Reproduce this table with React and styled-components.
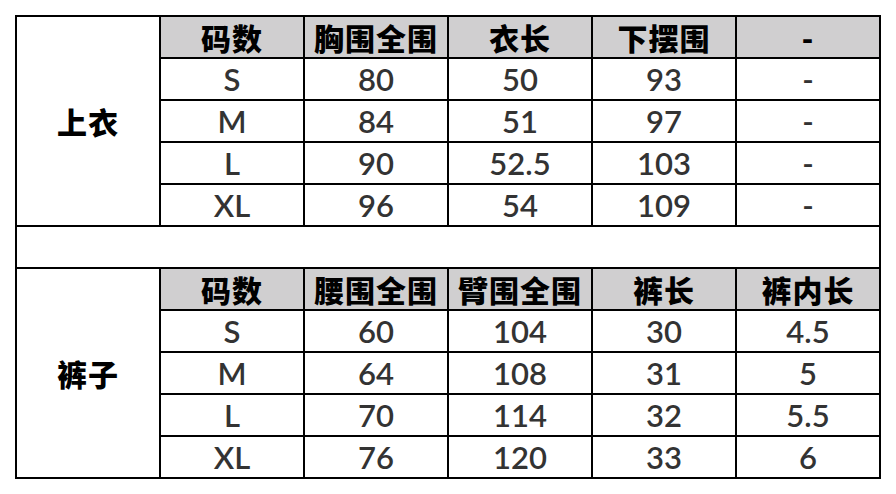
import React from "react";
import styled, { createGlobalStyle } from "styled-components";

const GlobalStyle = createGlobalStyle`
    body {
        margin: 0;
        background: #ffffff;
        font-family: Lato, "Noto Sans CJK SC", sans-serif;
    }
`;

const Page = styled.div`
    padding: 15px 0 0 15px;
`;

const SizeTable = styled.table`
    border-collapse: collapse;
    table-layout: fixed;
    width: 866px;
`;

const Col = styled.col`
    width: 144px;
`;

const Row = styled.tr`
    height: 42px;
`;

const Cell = styled.td`
    border: 2px solid #000;
    padding: 0;
    text-align: center;
    vertical-align: middle;
    line-height: 1;
    font-family: Lato, "Noto Sans CJK SC", sans-serif;
    font-size: 31px;
    font-weight: 600;
    color: #333;
`;

const HeadCell = styled(Cell)`
    background: #d0cfd0;
    color: #000;
    font-family: "Noto Sans CJK SC", sans-serif;
    font-size: 30px;
    font-weight: 900;
    letter-spacing: 1px;
`;

const GroupCell = styled(Cell)`
    color: #000;
    font-family: "Noto Sans CJK SC", sans-serif;
    font-size: 30px;
    font-weight: 900;
    letter-spacing: 1px;
`;

const SpacerCell = styled(Cell)``;

const groups = [
    {
        name: "上衣",
        heads: ["码数", "胸围全围", "衣长", "下摆围", "-"],
        rows: [
            ["S", "80", "50", "93", "-"],
            ["M", "84", "51", "97", "-"],
            ["L", "90", "52.5", "103", "-"],
            ["XL", "96", "54", "109", "-"],
        ],
    },
    {
        name: "裤子",
        heads: ["码数", "腰围全围", "臂围全围", "裤长", "裤内长"],
        rows: [
            ["S", "60", "104", "30", "4.5"],
            ["M", "64", "108", "31", "5"],
            ["L", "70", "114", "32", "5.5"],
            ["XL", "76", "120", "33", "6"],
        ],
    },
];

const Group = ({ group }) => (
    <>
        <Row>
            <GroupCell rowSpan={5}>{group.name}</GroupCell>
            {group.heads.map((h, i) => (
                <HeadCell key={i}>{h}</HeadCell>
            ))}
        </Row>
        {group.rows.map((r, i) => (
            <Row key={i}>
                {r.map((v, j) => (
                    <Cell key={j}>{v}</Cell>
                ))}
            </Row>
        ))}
    </>
);

const App = () => {
    return (
        <>
            <GlobalStyle />
            <Page>
                <SizeTable>
                    <colgroup>
                        {[0, 1, 2, 3, 4, 5].map(i => <Col key={i} />)}
                    </colgroup>
                    <tbody>
                        <Group group={groups[0]} />
                        <Row>
                            <SpacerCell colSpan={6} />
                        </Row>
                        <Group group={groups[1]} />
                    </tbody>
                </SizeTable>
            </Page>
        </>
    );
};

export default App;
